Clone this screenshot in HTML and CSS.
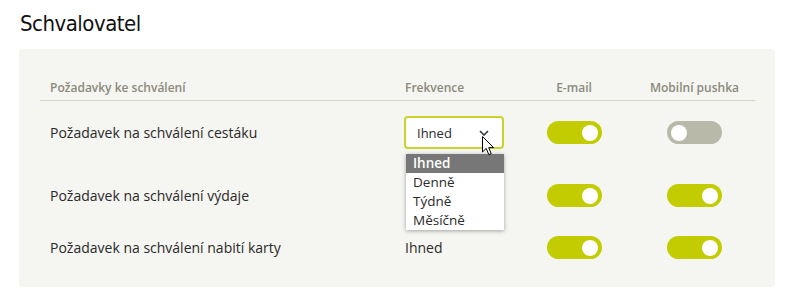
FILE: index.html
```html
<!DOCTYPE html>
<html lang="cs">
<head>
<meta charset="utf-8">
<link rel="stylesheet" href="styles.css">
</head>
<body>
<div class="page">
  <h1 class="title">Schvalovatel</h1>
  <section class="card">
    <div class="grid head">
      <div class="c-label">Požadavky ke schválení</div>
      <div class="c-freq">Frekvence</div>
      <div class="c-tog">E-mail</div>
      <div class="c-tog">Mobilní pushka</div>
    </div>
    <div class="grid row row1">
      <div class="c-label">Požadavek na schválení cestáku</div>
      <div class="c-freq">
        <div class="select">
          <span>Ihned</span>
          <svg class="chev" width="10" height="6" viewBox="0 0 10 6"><path d="M1 1 L5 5 L9 1" fill="none" stroke="#2b3340" stroke-width="1.5"/></svg>
          <svg class="cursor" width="13" height="20" viewBox="0 0 13 20"><path d="M0.5 0.5 L0.5 16 L4.2 12.4 L6.8 18.6 L9.2 17.6 L6.7 11.6 L11.6 11.6 Z" fill="#fff" stroke="#000" stroke-width="1" stroke-linejoin="round"/></svg>
          <ul class="menu">
            <li class="active">Ihned</li>
            <li>Denně</li>
            <li>Týdně</li>
            <li>Měsíčně</li>
          </ul>
        </div>
      </div>
      <div class="c-tog"><span class="toggle on"></span></div>
      <div class="c-tog"><span class="toggle off"></span></div>
    </div>
    <div class="grid row row2">
      <div class="c-label">Požadavek na schválení výdaje</div>
      <div class="c-freq"></div>
      <div class="c-tog"><span class="toggle on"></span></div>
      <div class="c-tog"><span class="toggle on"></span></div>
    </div>
    <div class="grid row row3">
      <div class="c-label">Požadavek na schválení nabití karty</div>
      <div class="c-freq"><span class="freq-text">Ihned</span></div>
      <div class="c-tog"><span class="toggle on"></span></div>
      <div class="c-tog"><span class="toggle on"></span></div>
    </div>
  </section>
</div>
</body>
</html>
```

FILE: styles.css
```css
* { box-sizing: border-box; }
html, body { margin: 0; padding: 0; background: #fff; }
body { font-family: "Open Sans", "Noto Sans", sans-serif; color: #2a2a2a; }

.page { padding: 11px 0 0 19px; width: 775px; }

.title {
  margin: 0 0 12px 1px;
  font-family: "DejaVu Sans Condensed", "DejaVu Sans", sans-serif;
  font-stretch: condensed;
  font-weight: 400;
  font-size: 22px;
  line-height: 26px;
  letter-spacing: -0.5px;
  color: #111;
}

.card {
  background: #f5f5f1;
  border-radius: 4px;
  padding: 0 20px 19px 21px;
  width: 756px;
}

.grid {
  display: grid;
  grid-template-columns: 364px 110px 120px 121px;
  align-items: center;
}

.head {
  padding: 31px 0 4px;
  line-height: 16px;
  font-size: 12px;
  font-weight: 600;
  color: #8c8a7c;
  border-bottom: 1px solid #d6d8c2;
}
.head .c-label { padding-left: 10px; }
.head .c-freq { padding-left: 1px; }

.c-tog { display: flex; justify-content: center; }

.row { font-size: 14px; }
.row .c-label { padding-left: 10px; }
.row1 { height: 63px; }
.row2 { height: 63px; }
.row3 { height: 41px; }

.freq-text { padding-left: 1px; }

.select {
  position: relative;
  width: 100px;
  height: 33px;
  background: #fff;
  border: 2px solid #cad32e;
  border-radius: 4px;
  display: flex;
  align-items: center;
  padding-left: 11px;
  font-size: 13px;
}
.chev { position: absolute; left: 73px; top: 12px; }
.cursor { position: absolute; left: 76px; top: 18px; z-index: 3; }

.menu {
  position: absolute;
  left: 0;
  top: 36px;
  width: 98px;
  margin: 0;
  padding: 0;
  list-style: none;
  background: #fff;
  box-shadow: 0 1px 4px rgba(0,0,0,0.35);
  z-index: 2;
  font-size: 13.5px;
}
.menu li { height: 19px; line-height: 19px; padding-left: 7px; }
.menu li.active { background: #777; color: #fff; font-weight: 600; }

.toggle {
  position: relative;
  display: block;
  width: 55px;
  height: 23px;
  border-radius: 12px;
  background: #c2cc00;
}
.toggle::after {
  content: "";
  position: absolute;
  top: 3.5px;
  width: 16px;
  height: 16px;
  border-radius: 50%;
  background: #fff;
}
.toggle.on::after { right: 4px; }
.toggle.off { background: #b9b9aa; }
.toggle.off::after { left: 4px; }
```
